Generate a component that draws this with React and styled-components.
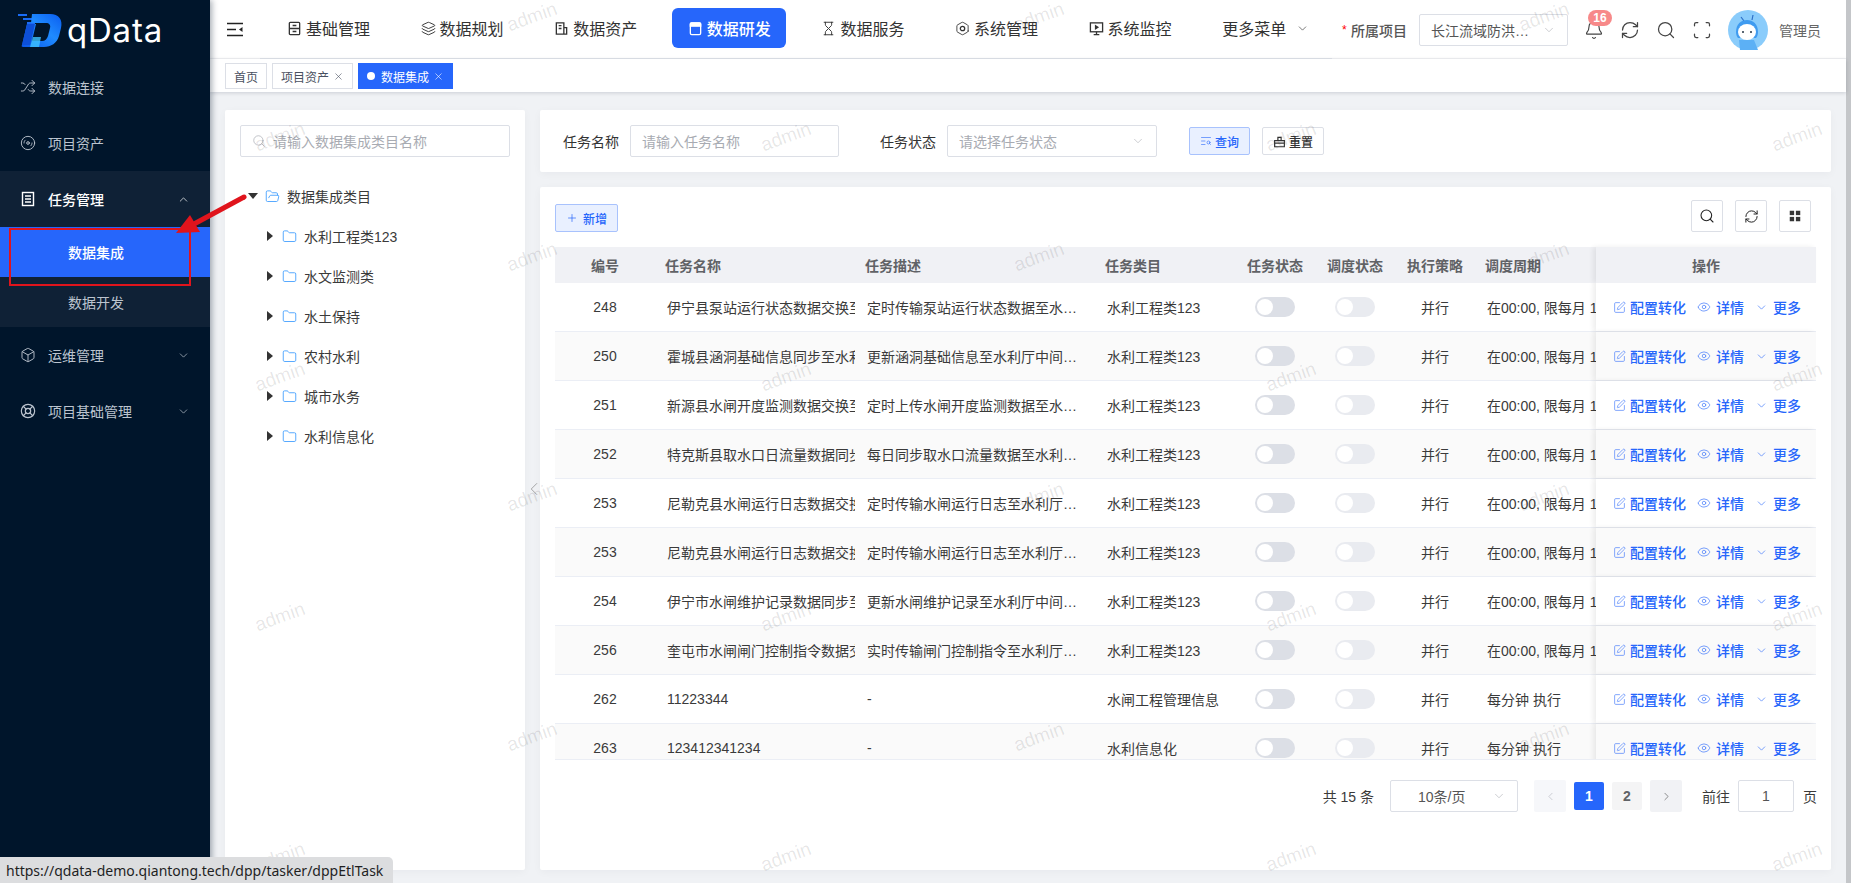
import React from 'react'
import styled, { createGlobalStyle } from 'styled-components'
import {
  Shuffle, Box, LifeBuoy, ChevronUp, ChevronDown, ChevronLeft, ChevronRight, Search, RefreshCw,
  Scan, Bell, Eye, SquarePen, X, Plus, Hourglass, Layers, Folder, FolderOpen, TextSearch, Hexagon, Disc3,
} from 'lucide-react'

const BLUE = '#2666fb'

const rows = [
  ['248', '伊宁县泵站运行状态数据交换至水利厅', '定时传输泵站运行状态数据至水利厅中间库', '水利工程类123', '在00:00, 限每月 1 号执行'],
  ['250', '霍城县涵洞基础信息同步至水利厅中间库', '更新涵洞基础信息至水利厅中间库数据表', '水利工程类123', '在00:00, 限每月 1 号执行'],
  ['251', '新源县水闸开度监测数据交换至水利厅', '定时上传水闸开度监测数据至水利厅中间库', '水利工程类123', '在00:00, 限每月 1 号执行'],
  ['252', '特克斯县取水口日流量数据同步至水利厅', '每日同步取水口流量数据至水利厅中间库', '水利工程类123', '在00:00, 限每月 1 号执行'],
  ['253', '尼勒克县水闸运行日志数据交换至水利厅', '定时传输水闸运行日志至水利厅中间库表', '水利工程类123', '在00:00, 限每月 1 号执行'],
  ['253', '尼勒克县水闸运行日志数据交换至水利厅', '定时传输水闸运行日志至水利厅中间库表', '水利工程类123', '在00:00, 限每月 1 号执行'],
  ['254', '伊宁市水闸维护记录数据同步至水利厅', '更新水闸维护记录至水利厅中间库数据表', '水利工程类123', '在00:00, 限每月 1 号执行'],
  ['256', '奎屯市水闸闸门控制指令数据交换至水利厅', '实时传输闸门控制指令至水利厅中间库表', '水利工程类123', '在00:00, 限每月 1 号执行'],
  ['262', '11223344', '-', '水闸工程管理信息', '每分钟 执行'],
  ['263', '123412341234', '-', '水利信息化', '每分钟 执行'],
]

const treeItems = ['水利工程类123', '水文监测类', '水土保持', '农村水利', '城市水务', '水利信息化']

// watermark grid, page coordinates
const marks = []
;[17, 137, 257, 377, 497, 617, 737, 857].forEach((y, i) => {
  const xs = i % 2 === 0 ? [532, 1039, 1544] : [280, 786, 1291, 1797]
  xs.forEach((x) => marks.push({ x: x - 210, y }))
})

const Global = createGlobalStyle`
  * { box-sizing: border-box; }
  html, body { margin: 0; height: 100%; overflow: hidden; }
  body {
    font-family: "Liberation Sans", "Noto Sans CJK SC", sans-serif;
    font-size: 14px;
    color: #333;
  }
`

const Page = styled.div`
  display: flex;
  position: relative;
  width: 1851px;
  height: 883px;
  overflow: hidden;
  background: #f0f2f5;
`

const Sidebar = styled.aside`
  width: 210px;
  flex: none;
  background: #00152b;
  box-shadow: 2px 0 6px rgba(0, 21, 41, 0.35);
  position: relative;
  z-index: 3;
`

const Brand = styled.div`
  height: 59px;
  display: flex;
  align-items: center;
  padding: 3px 0 0 17px;
  gap: 4px;
`

const BrandName = styled.span`
  font-family: Inter, sans-serif;
  font-size: 33px;
  color: #fff;
  letter-spacing: 0.8px;
  margin-top: -2px;
`

const MenuRow = styled.div`
  height: 56px;
  display: flex;
  align-items: center;
  padding: 0 20px 0 20px;
  gap: 12px;
  color: ${(p) => (p.$open ? '#fff' : '#bcc4cf')};
  font-weight: ${(p) => (p.$open ? 500 : 400)};
  background: ${(p) => (p.$open ? '#0f2136' : 'transparent')};
  span { flex: 1; }
`

const SubRow = styled.div`
  height: 50px;
  display: flex;
  align-items: center;
  justify-content: center;
  padding-right: 18px;
  background: ${(p) => (p.$active ? BLUE : '#0f2136')};
  color: ${(p) => (p.$active ? '#fff' : '#bcc4cf')};
  font-weight: ${(p) => (p.$active ? 500 : 400)};
`

const Main = styled.main`
  flex: 1;
  min-width: 0;
  position: relative;
  display: flex;
  flex-direction: column;
`

const Scrollbar = styled.div`
  width: 5px;
  flex: none;
  background: #c4c6c9;
`

const Header = styled.header`
  height: 59px;
  flex: none;
  display: flex;
  background: #fff;
  border-bottom: 1px solid #f1f2f4;
`

const Toggler = styled.div`
  width: 50px;
  flex: none;
  display: flex;
  align-items: center;
  padding-left: 17px;
`

const Nav = styled.nav`
  width: 1072px;
  flex: none;
  height: 59px;
  display: flex;
  align-items: center;
  gap: 19.6px;
  padding: 0 0 2px 11px;
  border-bottom: 1px solid #dfe3ea;
`

const NavItem = styled.div`
  width: 114px;
  height: 40px;
  flex: none;
  display: flex;
  align-items: center;
  padding-left: 16px;
  gap: 4px;
  border-radius: 6px;
  font-size: 16px;
  white-space: nowrap;
  color: ${(p) => (p.$active ? '#fff' : '#333')};
  font-weight: ${(p) => (p.$active ? 500 : 400)};
  background: ${(p) => (p.$active ? BLUE : 'transparent')};
`

const HeadRight = styled.div`
  flex: 1;
  display: flex;
  align-items: center;
  padding: 2px 0 0 10px;
`

const Required = styled.span`
  color: #f00;
  width: 9px;
  font-size: 12px;
`

const ProjectLabel = styled.span`
  font-weight: 500;
  color: #555;
  width: 68px;
`

const Field = styled.div`
  height: 32px;
  width: ${(p) => p.$w}px;
  flex: none;
  display: flex;
  align-items: center;
  justify-content: space-between;
  padding: 0 11px 0 11px;
  border: 1px solid #dcdfe6;
  border-radius: 2px;
  background: #fff;
  color: ${(p) => (p.$value ? '#555' : '#a8abb2')};
  white-space: nowrap;
`

const FieldText = styled.span`
  overflow: hidden;
  text-overflow: ellipsis;
  flex: 1;
  min-width: 0;
`

const HeadIcons = styled.div`
  display: flex;
  align-items: center;
  gap: 16px;
  margin-left: 16px;
  color: #444;
`

const BellWrap = styled.div`
  position: relative;
  display: flex;
`

const Badge = styled.span`
  position: absolute;
  top: -10px;
  left: 4px;
  width: 24px;
  height: 16px;
  border-radius: 8px;
  background: #f78989;
  color: #fff;
  font-size: 12px;
  font-weight: 700;
  line-height: 16px;
  text-align: center;
`

const UserName = styled.span`
  color: #666;
  margin-left: 11px;
`

const TagBar = styled.div`
  height: 33px;
  flex: none;
  display: flex;
  align-items: flex-start;
  gap: 5px;
  padding: 4px 0 0 15px;
  background: #fff;
  box-shadow: 0 1px 4px rgba(0, 21, 41, 0.16);
  position: relative;
`

const Tag = styled.div`
  height: 26px;
  display: flex;
  align-items: center;
  gap: 4px;
  padding: 0 8px;
  border: 1px solid ${(p) => (p.$active ? BLUE : '#dcdfe6')};
  background: ${(p) => (p.$active ? BLUE : '#fff')};
  color: ${(p) => (p.$active ? '#fff' : '#495060')};
  font-size: 12px;
`

const TagDot = styled.i`
  width: 8px;
  height: 8px;
  margin-right: 2px;
  border-radius: 50%;
  background: #fff;
`

const Content = styled.div`
  flex: 1;
  min-height: 0;
  display: flex;
  gap: 15px;
  padding: 18px 15px 13px;
`

const Panel = styled.section`
  background: #fff;
  border-radius: 2px;
  box-shadow: 0 2px 8px rgba(0, 21, 41, 0.04);
`

const TreePanel = styled(Panel)`
  width: 300px;
  flex: none;
  padding: 15px;
`

const SearchInput = styled(Field)`
  justify-content: flex-start;
  gap: 7px;
  padding-left: 11px;
  margin-bottom: 19px;
  width: 100%;
`

const TreeRow = styled.div`
  height: 40px;
  display: flex;
  align-items: center;
  padding-left: ${(p) => (p.$root ? 8 : 27)}px;
  gap: 7px;
  color: #3a3a3a;
`

const Caret = styled.i`
  flex: none;
  width: 0;
  height: 0;
  border-style: solid;
  ${(p) =>
    p.$down
      ? 'border-width: 6px 5px 0 5px; border-color: #333 transparent transparent transparent;'
      : 'border-width: 5px 0 5px 6px; border-color: transparent transparent transparent #333;'}
`

const Right = styled.div`
  flex: 1;
  min-width: 0;
  display: flex;
  flex-direction: column;
  gap: 15px;
`

const FilterPanel = styled(Panel)`
  height: 62px;
  flex: none;
  display: flex;
  align-items: center;
  padding-left: 23px;
`

const FilterLabel = styled.span`
  margin: 0 11px 0 ${(p) => p.$gap || 0}px;
  color: #333;
`

const SmallButton = styled.div`
  height: 28px;
  display: flex;
  align-items: center;
  gap: 3px;
  padding: 0 10px;
  margin-left: ${(p) => p.$gap || 0}px;
  border-radius: 2px;
  font-size: 12px;
  font-weight: 500;
  border: 1px solid ${(p) => (p.$primary ? '#a8c2fd' : '#dcdfe6')};
  background: ${(p) => (p.$primary ? '#e9f0ff' : '#fff')};
  color: ${(p) => (p.$primary ? BLUE : '#333')};
`

const TablePanel = styled(Panel)`
  flex: 1;
  min-height: 0;
  padding: 13px 15px 0;
`

const Toolbar = styled.div`
  height: 32px;
  display: flex;
  align-items: flex-end;
  justify-content: space-between;
  padding-right: 5px;
  margin-bottom: 15px;
`

const ToolIcons = styled.div`
  display: flex;
  gap: 12px;
`

const ToolIcon = styled.div`
  width: 32px;
  height: 32px;
  display: flex;
  align-items: center;
  justify-content: center;
  border: 1px solid #dcdfe6;
  border-radius: 2px;
  color: #222;
`

const Grid = styled.div`
  display: grid;
  grid-template-columns: 100px 200px 240px 140px 80px 80px 80px 121px 220px;
  align-items: stretch;
  background: ${(p) => p.$bg};
  height: ${(p) => p.$h}px;
  border-bottom: ${(p) => (p.$line ? '1px solid #ebeef5' : 'none')};
`

const Cell = styled.div`
  display: flex;
  align-items: center;
  justify-content: ${(p) => (p.$center ? 'center' : 'flex-start')};
  padding: 0 ${(p) => (p.$ellipsis ? 8 : p.$clip ? 2 : 0)}px 0 ${(p) => (p.$center ? 0 : 12)}px;
  min-width: 0;
  overflow: hidden;
  white-space: nowrap;
  color: #3a3a3a;
`

const Ellipsis = styled.span`
  overflow: hidden;
  text-overflow: ellipsis;
`

const HeadCell = styled(Cell)`
  color: #606266;
  font-weight: 700;
  padding-left: ${(p) => (p.$center ? 0 : 10)}px;
`

const FixedCell = styled.div`
  display: flex;
  align-items: center;
  justify-content: ${(p) => (p.$head ? 'center' : 'flex-start')};
  padding-left: ${(p) => (p.$head ? 0 : 17)}px;
  font-weight: ${(p) => (p.$head ? 700 : 400)};
  color: ${(p) => (p.$head ? '#606266' : BLUE)};
  background: inherit;
  box-shadow: -3px 0 5px rgba(0, 0, 0, 0.07);
  position: relative;
`

const TableBody = styled.div`
  height: 477px;
  overflow: hidden;
  border-bottom: 1px solid #ebeef5;
`

const Switch = styled.i`
  width: 40px;
  height: 20px;
  border-radius: 10px;
  padding: 2px;
  background: ${(p) => (p.$off ? '#e9ebf0' : '#dcdfe6')};
  display: flex;
  &::before {
    content: '';
    width: 16px;
    height: 16px;
    border-radius: 50%;
    background: #fff;
  }
`

const Action = styled.span`
  display: inline-flex;
  align-items: center;
  gap: ${(p) => p.$gap}px;
  margin-right: ${(p) => p.$mr || 0}px;
  font-weight: 500;
  svg { opacity: 0.75; flex: none; }
`

const Pager = styled.div`
  display: flex;
  justify-content: flex-end;
  align-items: center;
  margin: 20px -1px 0 0;
  height: 32px;
  color: #3a3a3a;
`

const PageSize = styled(Field)`
  margin: 0 16px;
  padding-left: 27px;
  color: #555;
`

const PageArrow = styled.div`
  width: 32px;
  height: 32px;
  display: flex;
  align-items: center;
  justify-content: center;
  background: ${(p) => (p.$off ? '#f6f7fa' : '#f1f2f5')};
  color: ${(p) => (p.$off ? '#b5b8bf' : '#555')};
  border-radius: 2px;
`

const PageNum = styled.div`
  width: 30px;
  height: 28px;
  margin: 0 ${(p) => (p.$last ? 8 : 0)}px 0 8px;
  display: flex;
  align-items: center;
  justify-content: center;
  font-weight: 700;
  border-radius: 2px;
  background: ${(p) => (p.$active ? BLUE : '#f4f4f5')};
  color: ${(p) => (p.$active ? '#fff' : '#606266')};
`

const PageInput = styled.div`
  width: 56px;
  height: 32px;
  margin: 0 9px 0 8px;
  display: flex;
  align-items: center;
  justify-content: center;
  border: 1px solid #dcdfe6;
  border-radius: 2px;
  color: #555;
`

const Goto = styled.span`
  margin-left: 20px;
`

const Watermark = styled.span.attrs((p) => ({ style: { left: p.$x, top: p.$y } }))`
  position: absolute;
  transform: translate(-50%, -50%) rotate(-20deg);
  font-size: 19px;
  color: rgba(0, 0, 0, 0.1);
  pointer-events: none;
  z-index: 2;
`

const CollapseArrow = styled.div`
  position: absolute;
  left: 313px;
  top: 478px;
  color: #888;
  display: flex;
`

const RedBox = styled.div`
  position: absolute;
  left: 9px;
  top: 228px;
  width: 182px;
  height: 58px;
  border: 2px solid #e0141c;
  z-index: 5;
`

const Arrow = styled.svg`
  position: absolute;
  left: 170px;
  top: 190px;
  z-index: 5;
`

const StatusTip = styled.div`
  position: absolute;
  left: 0;
  bottom: 0;
  width: 393px;
  height: 26px;
  display: flex;
  align-items: center;
  padding-left: 6px;
  background: #dcdddf;
  border-top-right-radius: 5px;
  font-family: "Noto Sans", sans-serif;
  font-size: 14px;
  color: #1f1f1f;
  z-index: 6;
  white-space: nowrap;
`

function Logo() {
  return (
    <svg width="46" height="36" viewBox="0 0 46 36">
      <defs>
        <linearGradient id="lg" x1="0" y1="1" x2="1" y2="0">
          <stop offset="0" stopColor="#0a56e8" />
          <stop offset="0.55" stopColor="#1f8bff" />
          <stop offset="1" stopColor="#0a5cf0" />
        </linearGradient>
      </defs>
      <path fill="#1a6cf5" d="M1 1h9v2H1zM6 5h11v2H6zM10 9h8v2h-8z" />
      <path
        fill="url(#lg)"
        fillRule="evenodd"
        d="M15 1h18c9 0 13 6 11 14l-2 8c-2 7-8 11-15 11H6c-1 0-2-1-1-2l5-21h9l-4 17h10c3 0 5-2 6-5l2-8c1-3-1-5-4-5H14z"
      />
      <path fill="#0d4fd8" d="M10 11h8l-5 21H5z" />
      <path fill="#3fc4ff" opacity="0.8" d="M16 24h8l-2 10h-9z" />
    </svg>
  )
}

function Avatar() {
  return (
    <svg width="40" height="40" viewBox="0 0 40 40">
      <circle cx="20" cy="20" r="20" fill="#8accfb" />
      <path d="M13 7l3 4M25 5l-1 5" stroke="#2b6fc8" strokeWidth="1.2" />
      <path d="M8 22c0-8 5-12 11-12s11 4 11 12c0 3-1 5-2 6H10c-1-1-2-3-2-6z" fill="#3f9bf0" />
      <ellipse cx="19" cy="22" rx="9" ry="8" fill="#fff" />
      <circle cx="15" cy="22" r="1" fill="#234" />
      <circle cx="23" cy="22" r="1" fill="#234" />
      <path d="M11 30h15l4 10H12z" fill="#5cb0f5" />
    </svg>
  )
}

// line icons that no package has in this shape
const Glyph = ({ children, size = 15, fill = 'none', color = 'currentColor' }) => (
  <svg width={size} height={size} viewBox="0 0 16 16" fill={fill} stroke={fill === 'none' ? color : 'none'} strokeWidth="1.4">
    {children}
  </svg>
)

const BaseIcon = () => (
  <Glyph><rect x="2.5" y="1.5" width="11" height="13" rx="1" /><path d="M2.5 8h11M6 4.8h4M6 11.2h4" /></Glyph>
)
const AssetIcon = () => (
  <Glyph><path d="M2.5 14V2h8v12zM10.5 7h3v7h-3M5 5h3M5 8h3" /></Glyph>
)
const DevIcon = () => (
  <Glyph>
    <rect x="2.5" y="2" width="11" height="12.5" rx="1.5" />
    <path d="M2.5 5.5h11V3a1 1 0 0 0-1-1h-9a1 1 0 0 0-1 1z" fill="currentColor" />
  </Glyph>
)
const MonitorIcon = () => (
  <Glyph><rect x="1.5" y="2" width="13" height="9.5" /><path d="M8 11.5V14M5 14.5h6" /><path d="M7 5l2.5 1.7L7 8.4z" fill="currentColor" /></Glyph>
)
const GearHole = styled.svg`
  position: absolute;
`
const GearWrap = styled.span`
  display: flex;
  position: relative;
`
const GearIcon = () => (
  <GearWrap>
    <Hexagon size={15} strokeWidth={1.4} />
    <GearHole width="15" height="15" viewBox="0 0 15 15">
      <circle cx="7.5" cy="7.5" r="2.2" fill="none" stroke="currentColor" strokeWidth="1.3" />
    </GearHole>
  </GearWrap>
)
const ListIcon = () => (
  <Glyph size={16}><rect x="2.5" y="1.5" width="11" height="13" /><path d="M5 5h6M5 8h6M5 11h6" /></Glyph>
)
const ToggleIcon = () => (
  <svg width="16" height="15" viewBox="0 0 16 15" fill="none" stroke="#222" strokeWidth="1.5">
    <path d="M0 1.5h16M0 7.5h9M0 13.5h16" />
    <path d="M15.5 5v5L12 7.5z" fill="#222" stroke="none" />
  </svg>
)
const BrushIcon = () => (
  <Glyph size={13} color="#333"><path d="M2 14.5V7h12v7.5zM2 10h12M6 7V3h4v4" /></Glyph>
)
const SquaresIcon = () => (
  <Glyph size={14} fill="#333"><rect x="2" y="2" width="5" height="5" /><rect x="9" y="2" width="5" height="5" /><rect x="2" y="9" width="5" height="5" /><rect x="9" y="9" width="5" height="5" /></Glyph>
)

const navItems = [
  ['基础管理', BaseIcon],
  ['数据规划', () => <Layers size={15} strokeWidth={1.5} />],
  ['数据资产', AssetIcon],
  ['数据研发', DevIcon, true],
  ['数据服务', () => <Hourglass size={15} strokeWidth={1.5} />],
  ['系统管理', GearIcon],
  ['系统监控', MonitorIcon],
]

const cols = [
  ['编号', true], ['任务名称'], ['任务描述'], ['任务类目'], ['任务状态', true], ['调度状态', true], ['执行策略', true], ['调度周期'],
]

export default function App() {
  return (
    <Page>
      <Global />
      <Sidebar>
        <Brand>
          <Logo />
          <BrandName>qData</BrandName>
        </Brand>
        <MenuRow><Shuffle size={16} strokeWidth={1.4} /><span>数据连接</span></MenuRow>
        <MenuRow><Disc3 size={16} strokeWidth={1.4} /><span>项目资产</span></MenuRow>
        <MenuRow $open><ListIcon /><span>任务管理</span><ChevronUp size={13} strokeWidth={1.3} /></MenuRow>
        <SubRow $active>数据集成</SubRow>
        <SubRow>数据开发</SubRow>
        <MenuRow><Box size={16} strokeWidth={1.4} /><span>运维管理</span><ChevronDown size={13} strokeWidth={1.3} /></MenuRow>
        <MenuRow><LifeBuoy size={16} strokeWidth={1.8} /><span>项目基础管理</span><ChevronDown size={13} strokeWidth={1.3} /></MenuRow>
      </Sidebar>

      <Main>
        <Header>
          <Toggler><ToggleIcon /></Toggler>
          <Nav>
            {navItems.map(([label, Icon, active]) => (
              <NavItem key={label} $active={active}><Icon />{label}</NavItem>
            ))}
            <NavItem>更多菜单<ChevronDown size={13} strokeWidth={1.2} style={{ marginLeft: 6 }} /></NavItem>
          </Nav>
          <HeadRight>
            <Required>*</Required>
            <ProjectLabel>所属项目</ProjectLabel>
            <Field $w={149} $value>
              <FieldText>长江流域防洪排涝项目</FieldText>
              <ChevronDown size={14} strokeWidth={1} color="#a8abb2" style={{ marginLeft: 10, flex: 'none' }} />
            </Field>
            <HeadIcons>
              <BellWrap>
                <Bell size={20} strokeWidth={1.4} />
                <Badge>16</Badge>
              </BellWrap>
              <RefreshCw size={20} strokeWidth={1.5} />
              <Search size={20} strokeWidth={1.5} />
              <Scan size={20} strokeWidth={1.5} />
              <Avatar />
            </HeadIcons>
            <UserName>管理员</UserName>
          </HeadRight>
        </Header>

        <TagBar>
          <Tag>首页</Tag>
          <Tag>项目资产<X size={11} strokeWidth={1.3} /></Tag>
          <Tag $active><TagDot />数据集成<X size={11} strokeWidth={1.3} /></Tag>
        </TagBar>

        <Content>
          <TreePanel>
            <SearchInput>
              <Search size={14} strokeWidth={1.2} />
              <FieldText>请输入数据集成类目名称</FieldText>
            </SearchInput>
            <TreeRow $root>
              <Caret $down />
              <FolderOpen size={15} strokeWidth={1.4} color="#409eff" />
              数据集成类目
            </TreeRow>
            {treeItems.map((item) => (
              <TreeRow key={item}>
                <Caret />
                <Folder size={15} strokeWidth={1.4} color="#409eff" style={{ marginLeft: 2 }} />
                {item}
              </TreeRow>
            ))}
          </TreePanel>

          <Right>
            <FilterPanel>
              <FilterLabel>任务名称</FilterLabel>
              <Field $w={209}>请输入任务名称</Field>
              <FilterLabel $gap={41}>任务状态</FilterLabel>
              <Field $w={210}>
                <FieldText>请选择任务状态</FieldText>
                <ChevronDown size={14} strokeWidth={1} color="#a8abb2" />
              </Field>
              <SmallButton $primary $gap={32}><TextSearch size={12} strokeWidth={1.2} />查询</SmallButton>
              <SmallButton $gap={12}><BrushIcon />重置</SmallButton>
            </FilterPanel>

            <TablePanel>
              <Toolbar>
                <SmallButton $primary><Plus size={12} strokeWidth={1.4} style={{ marginRight: 2 }} />新增</SmallButton>
                <ToolIcons>
                  <ToolIcon><Search size={16} strokeWidth={1.6} /></ToolIcon>
                  <ToolIcon><RefreshCw size={15} strokeWidth={1.6} /></ToolIcon>
                  <ToolIcon><SquaresIcon /></ToolIcon>
                </ToolIcons>
              </Toolbar>

              <Grid $bg="#f0f1f5" $h={36}>
                {cols.map(([label, center]) => (
                  <HeadCell key={label} $center={center}>{label}</HeadCell>
                ))}
                <FixedCell $head>操作</FixedCell>
              </Grid>
              <TableBody>
                {rows.map((r, i) => (
                  <Grid key={i} $bg={i % 2 ? '#fafafa' : '#fff'} $h={49} $line>
                    <Cell $center>{r[0]}</Cell>
                    <Cell $clip>{r[1]}</Cell>
                    <Cell $ellipsis><Ellipsis>{r[2]}</Ellipsis></Cell>
                    <Cell>{r[3]}</Cell>
                    <Cell $center><Switch /></Cell>
                    <Cell $center><Switch $off /></Cell>
                    <Cell $center>并行</Cell>
                    <Cell>{r[4]}</Cell>
                    <FixedCell>
                      <Action $gap={4} $mr={11}><SquarePen size={13} strokeWidth={1.4} />配置转化</Action>
                      <Action $gap={5} $mr={11}><Eye size={14} strokeWidth={1.4} />详情</Action>
                      <Action $gap={5}><ChevronDown size={13} strokeWidth={1.5} />更多</Action>
                    </FixedCell>
                  </Grid>
                ))}
              </TableBody>

              <Pager>
                <span>共 15 条</span>
                <PageSize $w={128}>
                  <FieldText>10条/页</FieldText>
                  <ChevronDown size={14} strokeWidth={1} color="#a8abb2" />
                </PageSize>
                <PageArrow $off><ChevronLeft size={13} strokeWidth={1.2} /></PageArrow>
                <PageNum $active>1</PageNum>
                <PageNum $last>2</PageNum>
                <PageArrow><ChevronRight size={13} strokeWidth={1.2} /></PageArrow>
                <Goto>前往</Goto>
                <PageInput>1</PageInput>
                <span>页</span>
              </Pager>
            </TablePanel>
          </Right>
        </Content>

        <CollapseArrow><ChevronLeft size={22} strokeWidth={0.8} /></CollapseArrow>
        {marks.map((m) => (
          <Watermark key={`${m.x}-${m.y}`} $x={m.x} $y={m.y}>admin</Watermark>
        ))}
      </Main>
      <Scrollbar />

      <RedBox />
      <Arrow width="80" height="50" viewBox="0 0 80 50">
        <path d="M74 7L24 34" stroke="#e0141c" strokeWidth="5" strokeLinecap="round" />
        <path d="M6 43L20 25L30 42z" fill="#e0141c" />
      </Arrow>
      <StatusTip>https://qdata-demo.qiantong.tech/dpp/tasker/dppEtlTask</StatusTip>
    </Page>
  )
}
